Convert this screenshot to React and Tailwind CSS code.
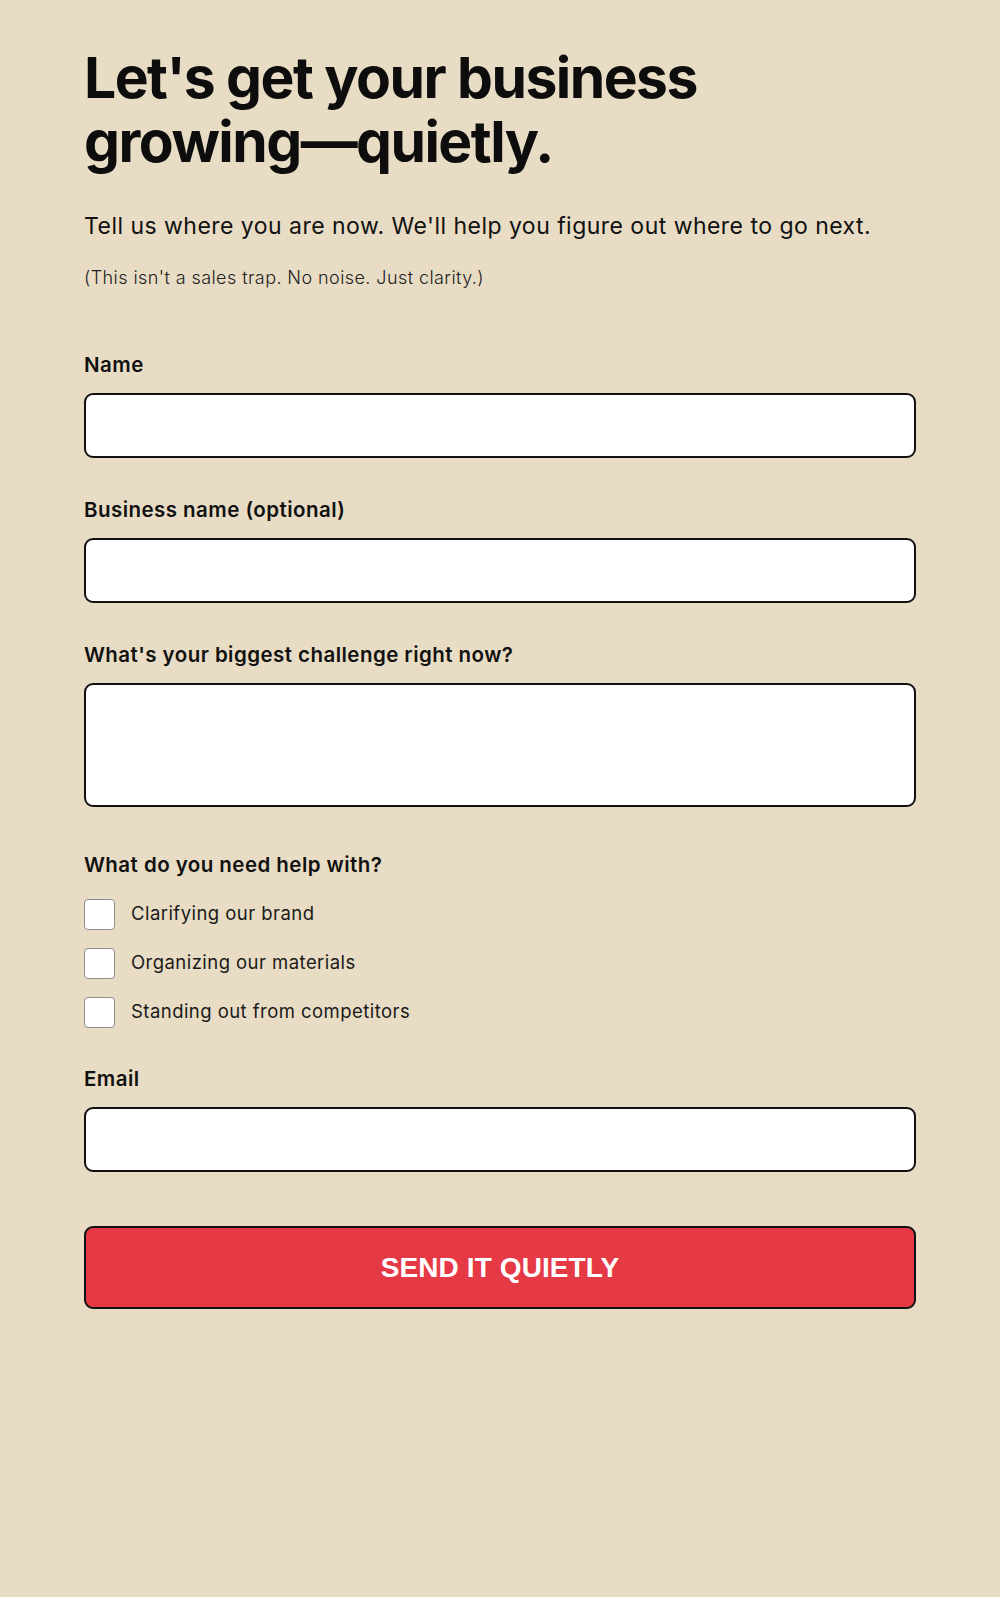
import React from "react";

const fieldClass =
  "block w-full h-[65px] bg-white border-2 border-[#111] rounded-[9px] px-4 text-lg outline-none";

function Field({ label, className = "", children }) {
  return (
    <div className={className}>
      <label className="block text-[20.5px] leading-[28px] font-semibold tracking-[0.45px] text-[#111] mb-[14px]">
        {label}
      </label>
      {children}
    </div>
  );
}

function Check({ label }) {
  return (
    <label className="flex items-center h-[30px]">
      <input
        type="checkbox"
        className="appearance-none w-[31px] h-[31px] bg-white border border-[#8d8d8d] rounded-[4px] shrink-0"
      />
      <span className="ml-[16px] text-[18.5px] tracking-[0.45px] text-[#1a1a1a]">{label}</span>
    </label>
  );
}

export default function App() {
  return (
    <div
      className="min-h-screen bg-[#e8dcc4] text-[#111]"
      style={{ fontFamily: "Inter, 'Noto Sans', sans-serif" }}
    >
      <div className="max-w-[832px] mx-auto pt-[46px] pb-24">
        {/* Header */}
        <h1 className="text-[57px] leading-[64px] font-bold tracking-[-0.027em] text-[#0d0d0d]">
          Let's get your business
          <br />
          growing—quietly.
        </h1>
        <p className="mt-[36px] text-[23px] leading-[32px] text-[#111] tracking-[0.47px]">
          Tell us where you are now. We'll help you figure out where to go next.
        </p>
        <p className="mt-[22px] text-[18px] leading-[27px] font-light tracking-[0.42px] text-[#222]">
          (This isn't a sales trap. No noise. Just clarity.)
        </p>

        {/* Form */}
        <form className="mt-[60px]" onSubmit={(e) => e.preventDefault()}>
          <Field label="Name">
            <input type="text" className={fieldClass} />
          </Field>

          <Field label="Business name (optional)" className="mt-[38px]">
            <input type="text" className={fieldClass} />
          </Field>

          <Field label="What's your biggest challenge right now?" className="mt-[38px]">
            <textarea className="block w-full h-[124px] bg-white border-2 border-[#111] rounded-[9px] px-4 py-3 text-lg outline-none resize-none" />
          </Field>

          <div className="mt-[44px]">
            <div className="text-[20.5px] leading-[28px] font-semibold tracking-[0.45px] text-[#111]">
              What do you need help with?
            </div>
            <div className="mt-[20px] flex flex-col gap-[19px]">
              <Check label="Clarifying our brand" />
              <Check label="Organizing our materials" />
              <Check label="Standing out from competitors" />
            </div>
          </div>

          <Field label="Email" className="mt-[38px]">
            <input type="email" className={fieldClass} />
          </Field>

          <button
            type="submit"
            className="mt-[54px] w-full h-[83px] bg-[#e63946] border-2 border-[#111] rounded-[9px] text-white font-bold uppercase text-[28px] tracking-[0.1px]"
            style={{ fontFamily: "'Liberation Sans', Arial, sans-serif" }}
          >
            Send it quietly
          </button>
        </form>
      </div>
    </div>
  );
}
